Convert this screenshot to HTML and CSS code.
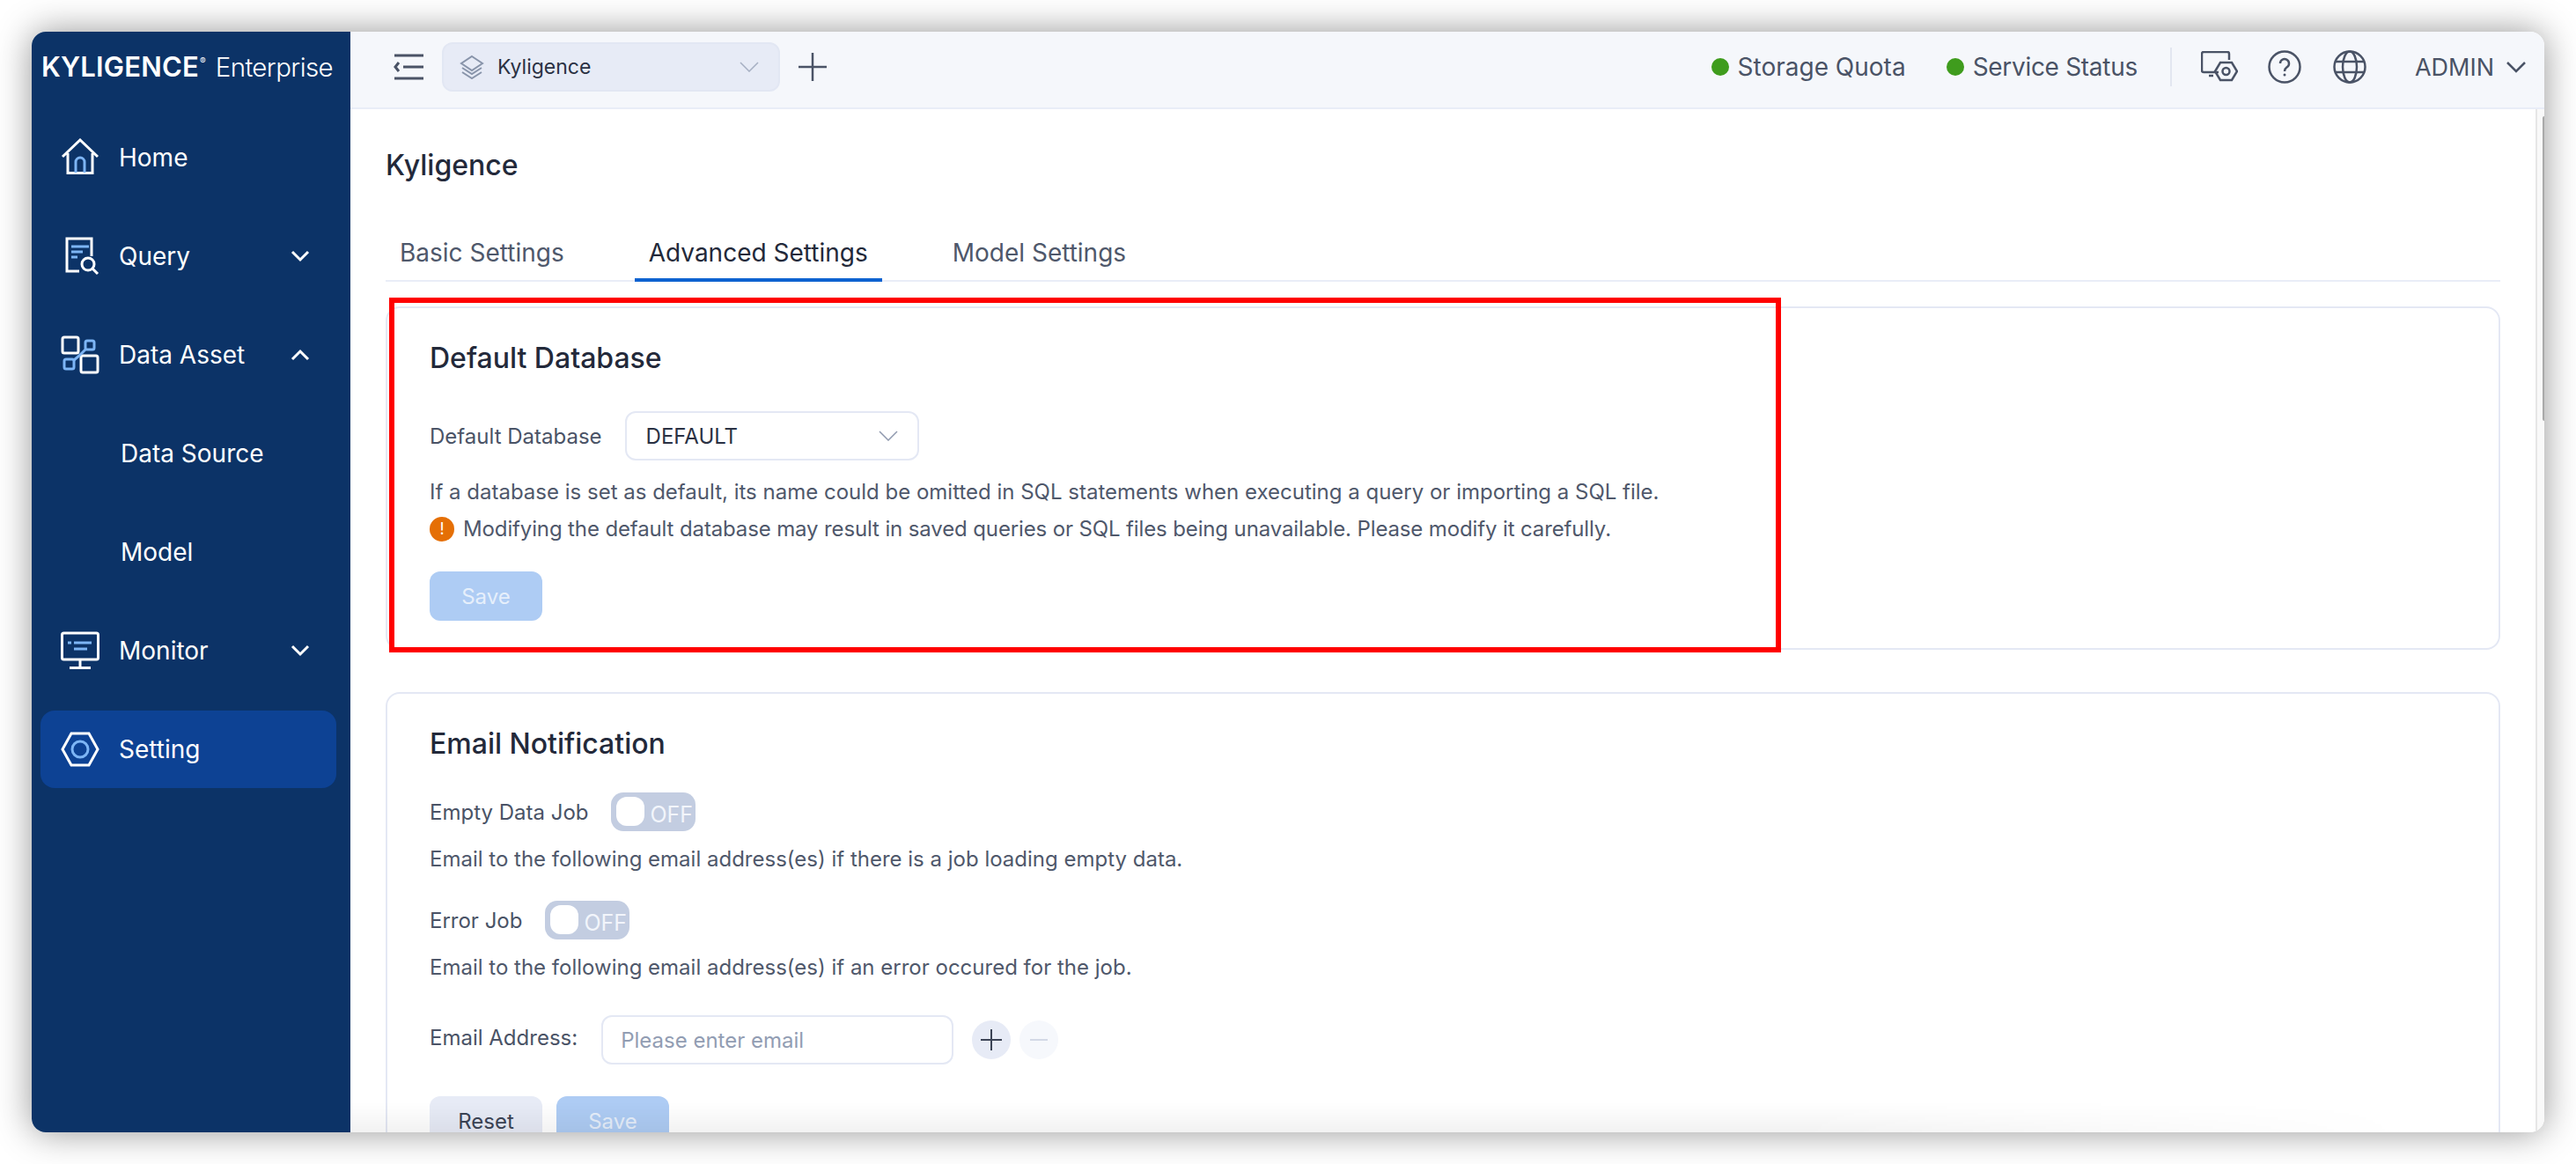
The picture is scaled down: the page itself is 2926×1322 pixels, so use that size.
FILE: index.html
```html
<!DOCTYPE html>
<html>

<head>
<title>Kyligence Enterprise</title>
<link rel="stylesheet" href="styles.css">
</head>

<body>
<div class="window">
	<aside class="sidebar">
		<div class="logo"><b>KYLIGENCE</b><sup>®</sup><span>Enterprise</span></div>
		<nav class="menu">
			<a class="menu-item">
				<svg class="menu-icon" viewBox="0 0 44 44"><path class="w" d="M2 21 22 2l20 19M8 17v22.500h28V17"/><path class="b" d="M17 39V27a5 5 0 0 1 10 0v12"/></svg>
				<span>Home</span>
			</a>
			<a class="menu-item">
				<svg class="menu-icon" viewBox="0 0 44 44"><path class="w" d="M21 39H7V2h28v20"/><path class="b" d="M12 11h20M12 17h13M12 23h7"/><circle class="w" cx="31" cy="31" r="7"/><path class="w" d="m36 36 6 6"/></svg>
				<span>Query</span>
				<svg class="menu-arrow" viewBox="0 0 22 14"><path d="m2 2 9 9 9-9"/></svg>
			</a>
			<a class="menu-item">
				<svg class="menu-icon" viewBox="0 0 44 44"><rect class="w" x="2" y="2" width="18" height="18" rx="2"/><rect class="w" x="23" y="23" width="19" height="19" rx="2"/><rect class="b" x="28" y="6" width="10" height="10" rx="2"/><rect class="b" x="4" y="27" width="11" height="11" rx="2"/><path class="b" d="m28 16-7 7-6 5"/></svg>
				<span>Data Asset</span>
				<svg class="menu-arrow" viewBox="0 0 22 14"><path d="m2 12 9-9 9 9"/></svg>
			</a>
			<a class="menu-item sub"><span>Data Source</span></a>
			<a class="menu-item sub"><span>Model</span></a>
			<a class="menu-item">
				<svg class="menu-icon" viewBox="0 0 44 44"><rect class="w" x="1.500" y="2" width="41" height="30" rx="2"/><path class="b" d="M8 13h4M15 13h20M15 20h15"/><path class="w" d="M22 32v8M10 41.500h24"/></svg>
				<span>Monitor</span>
				<svg class="menu-arrow" viewBox="0 0 22 14"><path d="m2 2 9 9 9-9"/></svg>
			</a>
			<a class="menu-item active">
				<svg class="menu-icon" viewBox="0 0 44 44"><path class="w" d="M12 4h20l10 18-10 18H12L2 22Z"/><circle class="b" cx="22" cy="22" r="9"/></svg>
				<span>Setting</span>
			</a>
		</nav>
	</aside>

	<div class="main">
		<header class="topbar">
			<svg class="icon-collapse" viewBox="0 0 34 30"><path d="M1 2h33M1 28h33M11 15h23M6 10l-4 5 4 5"/></svg>
			<div class="project-select">
				<svg class="layers" viewBox="0 0 28 28"><path d="M14 2 26 10 14 18 2 10Z"/><path d="m3 15 11 7 11-7M3 20l11 7 11-7"/></svg>
				<span>Kyligence</span>
				<svg class="select-arrow" viewBox="0 0 22 12"><path d="m1 1 10 10L21 1"/></svg>
			</div>
			<svg class="icon-add" viewBox="0 0 32 32"><path d="M0 16h32M16 0v32"/></svg>
			<div class="status-group">
				<span class="status"><i class="dot"></i>Storage Quota</span>
				<span class="status"><i class="dot"></i>Service Status</span>
			</div>
			<i class="divider"></i>
			<svg class="tool-icon" viewBox="0 0 42 36"><path d="M20 24H3a2 2 0 0 1-2-2V3a2 2 0 0 1 2-2h27a2 2 0 0 1 2 2v7M9 28h5"/><path d="M22 13h13l6 10-6 10H22l-6-10Z"/><circle cx="28.500" cy="23" r="4"/></svg>
			<svg class="tool-icon round" viewBox="0 0 38 38"><circle cx="19" cy="19" r="17.500"/><path d="M14 15a5 5 0 1 1 8 4c-2 1.500-3 2-3 5"/><circle class="fill" cx="19" cy="28" r="1.500"/></svg>
			<svg class="tool-icon round" viewBox="0 0 38 38"><circle cx="19" cy="19" r="17.500"/><ellipse cx="19" cy="19" rx="8" ry="17.500"/><path d="M3 13h32M3 25h32"/></svg>
			<span class="user">ADMIN<svg viewBox="0 0 24 14"><path d="m2 2 10 10L22 2"/></svg></span>
		</header>

		<div class="body-row">
			<main class="content">
				<h1 class="page-title">Kyligence</h1>
				<div class="tabs">
					<span class="tab">Basic Settings</span>
					<span class="tab current">Advanced Settings</span>
					<span class="tab">Model Settings</span>
				</div>

				<section class="card card-db">
					<h2>Default Database</h2>
					<div class="form-row first">
						<label>Default Database</label>
						<div class="db-select"><span>DEFAULT</span><svg viewBox="0 0 22 12"><path d="m1 1 10 10L21 1"/></svg></div>
					</div>
					<p class="help help-db">If a database is set as default, its name could be omitted in SQL statements when executing a query or importing a SQL file.</p>
					<p class="help warn"><i class="warn-icon">!</i>Modifying the default database may result in saved queries or SQL files being unavailable. Please modify it carefully.</p>
					<div class="actions"><button class="btn primary">Save</button></div>
				</section>

				<section class="card card-mail">
					<h2>Email Notification</h2>
					<div class="form-row toggle-row first-toggle">
						<label>Empty Data Job</label>
						<span class="switch"><i></i>OFF</span>
					</div>
					<p class="help help-mail">Email to the following email address(es) if there is a job loading empty data.</p>
					<div class="form-row toggle-row">
						<label>Error Job</label>
						<span class="switch"><i></i>OFF</span>
					</div>
					<p class="help help-mail">Email to the following email address(es) if an error occured for the job.</p>
					<div class="form-row email-row">
						<label>Email Address:</label>
						<div class="email-input">Please enter email</div>
						<span class="round-btn"><svg viewBox="0 0 24 24"><path d="M0 12h24M12 0v24"/></svg></span>
						<span class="round-btn off"><svg viewBox="0 0 24 24"><path d="M2 12h20"/></svg></span>
					</div>
					<div class="actions mail-actions">
						<button class="btn plain">Reset</button>
						<button class="btn primary">Save</button>
					</div>
				</section>
			</main>
			<div class="scrollbar"><i></i></div>
		</div>
	</div>

	<div class="bottom-fade"></div>
	<div class="highlight"></div>
</div>
</body>

</html>
```

FILE: styles.css
```css
* { box-sizing: border-box; }
html, body { height: 100%; }
body { background: #fff; color: #4f586b; font-family: Inter, "Noto Sans", sans-serif; font-size: 24px; margin: 0; overflow: hidden; padding: 36px; }
h1, h2, p { font-weight: 400; margin: 0; }

.window { background: #fff; border-radius: 16px; box-shadow: 0 0 40px rgba(0, 0, 0, .42); display: flex; height: 1250px; overflow: hidden; position: relative; width: 2854px; }

/* sidebar */
.sidebar { background: #0c3367; color: #fff; flex: none; width: 362px; }
.logo { align-items: baseline; display: flex; height: 86px; padding: 21px 0 0 11px; white-space: nowrap; }
.logo b { font-size: 31px; font-weight: 600; letter-spacing: .2px; }
.logo sup { align-self: flex-start; font-size: 10px; line-height: 14px; margin: 5px 11px 0 1px; }
.logo span { font-size: 29.500px; font-weight: 300; letter-spacing: -.6px; }
.menu { display: flex; flex-direction: column; gap: 24px; padding: 13px 16px 0 10px; }
.menu-item { align-items: center; border-radius: 16px; display: flex; font-size: 28px; height: 88px; padding: 0 30px 0 23px; }
.menu-item.sub { padding-left: 91px; }
.menu-item.active { background: #0d4294; }
.menu-icon { flex: none; height: 44px; margin-right: 22px; width: 44px; }
.menu-icon .w, .menu-icon .b { fill: none; stroke-width: 3; }
.menu-icon .w { stroke: #fff; }
.menu-icon .b { stroke: #7db5f5; }
.menu-arrow { fill: none; height: 14px; margin-left: auto; stroke: #fff; stroke-width: 3; width: 22px; }

/* top bar */
.main { display: flex; flex: 1; flex-direction: column; min-width: 0; }
.topbar { align-items: center; background: #f5f7fb; border-bottom: 2px solid #e9edf7; display: flex; flex: none; height: 88px; padding: 0 0 6px 49px; }
.icon-collapse { fill: none; height: 30px; stroke: #4a5366; stroke-width: 3; width: 34px; }
.project-select { align-items: center; background: #e7ebf6; border: 2px solid #e2e7f3; border-radius: 12px; color: #2a3143; display: flex; font-size: 23px; height: 56px; margin-left: 21px; padding: 0 22px 0 18px; width: 384px; }
.layers { fill: none; flex: none; height: 28px; margin-right: 15px; stroke: #8894aa; stroke-width: 2; width: 28px; }
.select-arrow { fill: none; height: 12px; margin-left: auto; stroke: #a6afc2; stroke-width: 1.500; width: 22px; }
.icon-add { fill: none; height: 32px; margin-left: 21px; stroke: #4a5366; stroke-width: 2.500; width: 32px; }
.status-group { display: flex; gap: 46px; margin-left: auto; }
.status { align-items: center; color: #4a5366; display: flex; font-size: 28px; }
.status + .status { letter-spacing: -.3px; }
.dot { background: #3f9c1d; border-radius: 50%; height: 20px; margin-right: 10px; width: 20px; }
.divider { background: #e2e6f0; height: 44px; margin: 0 33px 0 37px; width: 2px; }
.tool-icon { fill: none; height: 36px; margin-right: 34px; stroke: #4a5366; stroke-width: 2.500; width: 42px; }
.tool-icon.round { height: 38px; margin-right: 36px; width: 38px; }
.tool-icon .fill { fill: #4a5366; stroke: none; }
.user { align-items: center; color: #4a5366; display: flex; font-size: 27px; margin-left: 19px; padding-right: 20px; }
.user svg { fill: none; height: 14px; margin-left: 13px; stroke: #4a5366; stroke-width: 2.500; width: 24px; }

/* content */
.body-row { display: flex; flex: 1; min-height: 0; }
.content { flex: 1; min-width: 0; padding: 44px 40px 0; }
.page-title { color: #23293a; font-size: 32px; font-weight: 500; line-height: 40px; }
.tabs { border-bottom: 2px solid #e9edf7; display: flex; gap: 64px; height: 68px; margin-top: 44px; }
.tab { color: #4f586b; font-size: 28px; height: 68px; line-height: 70px; padding: 0 16px; }
.tab.current { border-bottom: 4px solid #0e62d0; color: #23293a; }
.scrollbar { background: #f9f9f9; border-left: 2px solid #e6e6e6; flex: none; padding: 8px 0 0 6px; width: 10px; }
.scrollbar i { background: #a9a9a9; border-radius: 2px 0 0 2px; display: block; height: 346px; }

.card { border: 2px solid #e4e8f4; border-radius: 16px; padding: 37px 48px 0; }
.card-db { height: 390px; margin-top: 28px; }
.card-mail { height: 560px; margin-top: 48px; }
.card h2 { color: #23293a; font-size: 32px; font-weight: 500; line-height: 40px; }
.form-row { align-items: center; display: flex; font-size: 24px; }
.form-row label { color: #4a5366; margin-right: 26px; }
.form-row.first { height: 56px; margin-top: 40px; }
.db-select { align-items: center; border: 2px solid #e4e8f4; border-radius: 12px; color: #2a3143; display: flex; height: 56px; justify-content: space-between; padding: 0 22px; width: 334px; }
.db-select svg { fill: none; height: 12px; stroke: #8f99ae; stroke-width: 1.500; width: 22px; }
.help { font-size: 24px; line-height: 42px; }
.help-db { margin-top: 15px; }
.warn { align-items: center; display: flex; letter-spacing: -.13px; }
.warn-icon { background: #e56f05; border-radius: 50%; color: #fff; font-size: 18px; font-style: normal; height: 28px; line-height: 28px; margin-right: 10px; text-align: center; width: 28px; }
.actions { display: flex; gap: 16px; margin-top: 27px; }
.btn { border: 0; border-radius: 12px; font-family: inherit; font-size: 24px; height: 56px; padding: 0; width: 128px; }
.btn.primary { background: #aeccf4; color: #e6effb; }
.btn.plain { background: #e7ebf6; color: #3c4456; }

.toggle-row { height: 44px; margin-top: 26px; }
.first-toggle { margin-top: 35px; }
.switch { background: #c3cde1; border-radius: 14px; color: #f2f5fb; display: flex; font-size: 25px; height: 44px; line-height: 50px; overflow: hidden; padding-left: 6px; width: 96px; }
.switch i { background: #fff; border-radius: 12px; flex: none; height: 33px; margin: 5px 6px 0 0; width: 32px; }
.help-mail { margin-top: 11px; }
.email-row { height: 56px; margin-top: 33px; }
.email-row label { margin-right: 27px; position: relative; top: -3px; }
.email-input { align-items: center; border: 2px solid #e4e8f4; border-radius: 12px; color: #929db3; display: flex; height: 56px; padding: 0 20px; width: 400px; }
.round-btn { align-items: center; background: #e7ebf6; border-radius: 50%; display: flex; height: 44px; justify-content: center; margin-left: 21px; width: 44px; }
.round-btn.off { background: #f6f8fc; margin-left: 10px; }
.round-btn svg { fill: none; height: 24px; stroke: #3c4456; stroke-width: 2; width: 24px; }
.round-btn.off svg { stroke: #d3d9e6; }
.mail-actions { margin-top: 36px; }

/* things lying over the page */
.bottom-fade { background: linear-gradient(rgba(0, 0, 0, 0), rgba(0, 0, 0, .05)); bottom: 0; height: 34px; left: 362px; -webkit-mask-image: linear-gradient(to right, #000 70%, transparent); mask-image: linear-gradient(to right, #000 70%, transparent); pointer-events: none; position: absolute; width: 2340px; }
.highlight { border: 6px solid #f00; height: 403px; left: 406px; pointer-events: none; position: absolute; top: 302px; width: 1581px; }
```
